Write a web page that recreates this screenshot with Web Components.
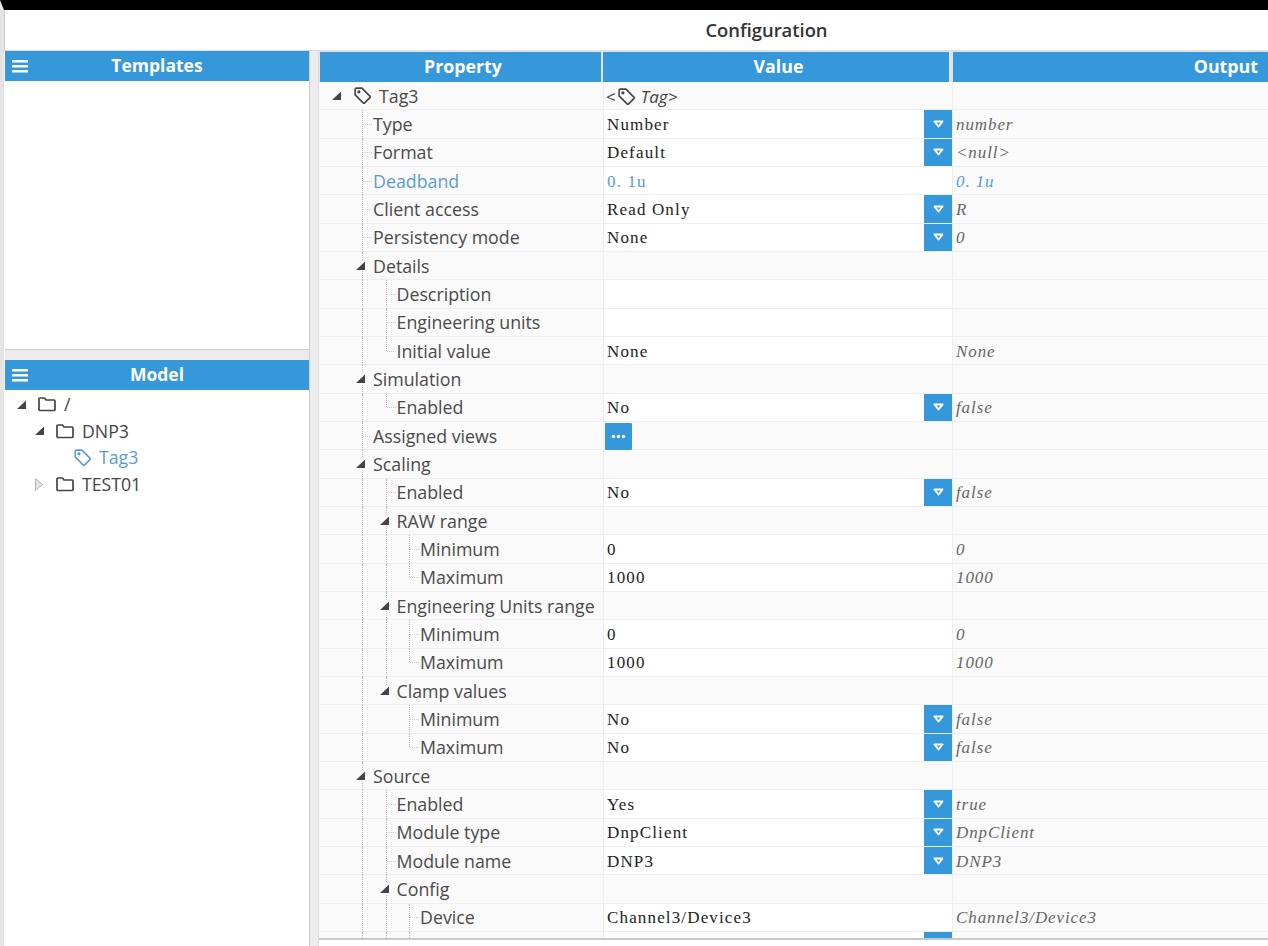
<!DOCTYPE html>
<html>
<head>
<meta charset="utf-8">
<title>Configuration</title>
<style>
html, body { margin: 0; height: 100%; overflow: hidden; background: #fff; }
body { font-family: "Open Sans", sans-serif; color: #444; }
</style>
</head>
<body>
<app-shell>
  <pane-header slot="templates-head" menu>Templates</pane-header>
  <pane-header slot="model-head" menu>Model</pane-header>
  <model-tree slot="model">
    <tree-item depth="0" open icon="folder">/</tree-item>
    <tree-item depth="1" open icon="folder">DNP3</tree-item>
    <tree-item depth="2" icon="tag" active>Tag3</tree-item>
    <tree-item depth="1" closed icon="folder">TEST01</tree-item>
  </model-tree>
  <prop-grid slot="config">
    <prop-row depth="0" group root output="">Tag3</prop-row>
    <prop-row depth="1" value="Number" output="number" dd>Type</prop-row>
    <prop-row depth="1" value="Default" output="<null>" dd>Format</prop-row>
    <prop-row depth="1" value="0. 1u" output="0. 1u" changed>Deadband</prop-row>
    <prop-row depth="1" value="Read Only" output="R" dd>Client access</prop-row>
    <prop-row depth="1" value="None" output="0" dd>Persistency mode</prop-row>
    <prop-row depth="1" group>Details</prop-row>
    <prop-row depth="2" edit>Description</prop-row>
    <prop-row depth="2" edit>Engineering units</prop-row>
    <prop-row depth="2" last value="None" output="None">Initial value</prop-row>
    <prop-row depth="1" group>Simulation</prop-row>
    <prop-row depth="2" last value="No" output="false" dd>Enabled</prop-row>
    <prop-row depth="1" more>Assigned views</prop-row>
    <prop-row depth="1" group>Scaling</prop-row>
    <prop-row depth="2" value="No" output="false" dd>Enabled</prop-row>
    <prop-row depth="2" group>RAW range</prop-row>
    <prop-row depth="3" value="0" output="0">Minimum</prop-row>
    <prop-row depth="3" last value="1000" output="1000">Maximum</prop-row>
    <prop-row depth="2" group>Engineering Units range</prop-row>
    <prop-row depth="3" value="0" output="0">Minimum</prop-row>
    <prop-row depth="3" last value="1000" output="1000">Maximum</prop-row>
    <prop-row depth="2" group last>Clamp values</prop-row>
    <prop-row depth="3" nolevel2 value="No" output="false" dd>Minimum</prop-row>
    <prop-row depth="3" nolevel2 last value="No" output="false" dd>Maximum</prop-row>
    <prop-row depth="1" group>Source</prop-row>
    <prop-row depth="2" value="Yes" output="true" dd>Enabled</prop-row>
    <prop-row depth="2" value="DnpClient" output="DnpClient" dd>Module type</prop-row>
    <prop-row depth="2" value="DNP3" output="DNP3" dd>Module name</prop-row>
    <prop-row depth="2" group>Config</prop-row>
    <prop-row depth="3" value="Channel3/Device3" output="Channel3/Device3">Device</prop-row>
    <prop-row depth="3" dd></prop-row>
  </prop-grid>
</app-shell>

<script>
const TAG_ICON = '<svg width="17" height="17" viewBox="1 1 15 15" fill="none" stroke="currentColor" stroke-width="1.400" stroke-linejoin="round"><path d="M2 3a1 1 0 0 1 1-1h5l7 7a1 1 0 0 1 0 1.400L10.400 15a1 1 0 0 1-1.400 0L2 8z"/><circle cx="5.300" cy="5.300" r=".7"/></svg>';
const FOLDER_ICON = '<svg width="18" height="16" viewBox="0 0 18 16" fill="none" stroke="currentColor" stroke-width="1.700" stroke-linejoin="round"><path d="M1 3a1 1 0 0 1 1-1h4.500l1.500 2h8a1 1 0 0 1 1 1v8.500a1 1 0 0 1-1 1H2a1 1 0 0 1-1-1z"/></svg>';
const OPEN_TOGGLE = '<svg width="11" height="11" viewBox="0 0 11 11"><path d="M10 1.500V10H1z" fill="#444"/></svg>';
const CLOSED_TOGGLE = '<svg width="9" height="15" viewBox="0 0 9 15"><path d="M1.500 1.500l7 6-7 6z" fill="#e4e4e4" stroke="#b5b5b5"/></svg>';

class AppShell extends HTMLElement {
  constructor() {
    super();
    this.attachShadow({ mode: 'open' });
    this.shadowRoot.innerHTML = `
      <style>
        :host { display: block; height: 946px; width: 1268px; box-sizing: border-box; border-top: 10px solid #000; border-left: 4px solid #e4e4e4; overflow: hidden; }
        .title { height: 41px; line-height: 40px; text-align: center; font-weight: 600; font-size: 18.400px; color: #333; border-left: 1px solid #ccc; border-bottom: 1px solid #ddd; box-sizing: border-box; padding-left: 260px; }
        .main { display: flex; height: 895px; padding-left: 1px; }
        .left { width: 304px; flex: none; display: flex; flex-direction: column; }
        .split-v { width: 10px; flex: none; background: #ececec; border-left: 1px solid #ccc; border-right: 1px solid #ddd; box-sizing: border-box; }
        .split-h { height: 11px; flex: none; background: #ececec; border-top: 1px solid #ccc; box-sizing: border-box; }
        .pane-top { height: 298px; flex: none; }
        .pane-bottom { flex: 1; min-height: 0; }
        .right { flex: 1; min-width: 0; height: 887px; border-bottom: 2px solid #c8c8c8; overflow: hidden; }
      </style>
      <div class="title">Configuration</div>
      <div class="main">
        <div class="left">
          <div class="pane-top"><slot name="templates-head"></slot></div>
          <div class="split-h"></div>
          <div class="pane-bottom"><slot name="model-head"></slot><slot name="model"></slot></div>
        </div>
        <div class="split-v"></div>
        <div class="right"><slot name="config"></slot></div>
      </div>`;
  }
}

class PaneHeader extends HTMLElement {
  constructor() {
    super();
    this.attachShadow({ mode: 'open' });
    this.shadowRoot.innerHTML = `
      <style>
        :host { display: block; position: relative; height: 30px; line-height: 29px; background: #3498db; color: #fff; font-weight: 700; font-size: 17.500px; text-align: center; }
        svg { position: absolute; left: 7px; top: 8px; }
      </style>
      <svg width="17" height="15" viewBox="0 0 17 15" fill="#fff"><rect y="1" width="16" height="2.500"/><rect y="6" width="16" height="2.500"/><rect y="11" width="16" height="2.500"/></svg>
      <slot></slot>`;
  }
}

class ModelTree extends HTMLElement {
  constructor() {
    super();
    this.attachShadow({ mode: 'open' });
    this.shadowRoot.innerHTML = `
      <style>:host { display: block; padding-top: 1px; }</style>
      <slot></slot>`;
  }
}

class TreeItem extends HTMLElement {
  connectedCallback() {
    if (this.shadowRoot) return;
    this.attachShadow({ mode: 'open' });
    const depth = +this.getAttribute('depth');
    const toggle = this.hasAttribute('open') ? OPEN_TOGGLE : this.hasAttribute('closed') ? CLOSED_TOGGLE : '';
    const icon = this.getAttribute('icon') === 'tag' ? TAG_ICON : FOLDER_ICON;
    this.shadowRoot.innerHTML = `
      <style>
        :host { display: flex; align-items: center; height: 26.600px; font-size: 17.700px; color: #444; padding-left: ${11 + depth * 18}px; }
        :host([active]) { color: #5b9bd5; }
        .toggle { width: 22px; flex: none; display: flex; align-items: center; }
        .icon { display: flex; margin-right: 8px; color: #444; }
        :host([active]) .icon { color: #5b9bd5; }
      </style>
      <span class="toggle">${toggle}</span><span class="icon">${icon}</span><slot></slot>`;
  }
}

class PropGrid extends HTMLElement {
  constructor() {
    super();
    this.attachShadow({ mode: 'open' });
    this.shadowRoot.innerHTML = `
      <style>
        :host { display: block; }
        .head { display: grid; grid-template-columns: 281px 346px 1fr; column-gap: 2px; height: 31px; box-sizing: border-box; padding: 1px 0 0 1px; line-height: 29px; background: #e4e4e4; color: #fff; font-weight: 700; font-size: 17.800px; text-align: center; }
        .head div { background: #3498db; padding-left: 5px; box-sizing: border-box; }
        .head div:last-child { margin-left: 2px; padding: 0 10px 0 0; text-align: right; }
      </style>
      <div class="head"><div>Property</div><div>Value</div><div>Output</div></div>
      <slot></slot>`;
  }
}

class PropRow extends HTMLElement {
  connectedCallback() {
    if (this.shadowRoot) return;
    this.attachShadow({ mode: 'open' });
    const depth = +this.getAttribute('depth');
    const isGroup = this.hasAttribute('group');
    const isLast = this.hasAttribute('last');
    const value = this.getAttribute('value') || '';
    const output = this.getAttribute('output') || '';
    const esc = s => s.replace(/</g, '&lt;').replace(/>/g, '&gt;');

    // tree guides, one column for each level above this row
    let guides = '';
    for (let d = 1; d <= depth; d++) {
      const own = d === depth;
      const cls = ['guide'];
      if (own) cls.push('own');
      if (own && isLast) cls.push('half');
      if (own && !isGroup) cls.push('stub');
      const line = d === 2 && this.hasAttribute('nolevel2') ? '' : '<span class="v"></span>';
      guides += `<span class="${cls.join(' ')}">${line}${own && isGroup ? OPEN_TOGGLE : ''}</span>`;
    }
    if (this.hasAttribute('root')) guides = `<span class="root-toggle">${OPEN_TOGGLE}</span><span class="root-icon">${TAG_ICON}</span>`;

    let valueCell = `<span class="text">${esc(value)}</span>`;
    if (this.hasAttribute('root')) valueCell = `<span class="tagval">&lt;<span class="ti">${TAG_ICON}</span><i>Tag&gt;</i></span>`;
    if (this.hasAttribute('dd')) valueCell += '<drop-btn></drop-btn>';
    if (this.hasAttribute('more')) valueCell = '<more-btn></more-btn>';

    const white = !isGroup && !this.hasAttribute('more') ? ' white' : '';
    this.shadowRoot.innerHTML = `
      <style>
        :host { display: grid; grid-template-columns: 284px 349px 1fr; height: 28.330px; box-sizing: border-box; color: #4a4a4a; font-size: 17.800px; background: #fafafa; }
        .cell { box-sizing: border-box; min-width: 0; display: flex; align-items: center; border-bottom: 1px solid #eee; height: 28.330px; position: relative; }
        .prop { padding-left: 43px; }
        .val { border-left: 1px solid #eee; font-family: "Liberation Serif", serif; font-size: 17px; letter-spacing: 1.150px; color: #222; padding: 2px 0 0 3px; }
        .val.white { background: #fff; }
        .out { font-family: "Liberation Serif", serif; font-size: 17px; letter-spacing: .9px; font-style: italic; color: #666; padding: 2px 0 0 3px; border-left: 1px solid #eee; }
        :host([changed]) .prop, :host([changed]) .val, :host([changed]) .out { color: #5b9bd5; }
        .guide { width: 23.500px; flex: none; height: 100%; position: relative; }
        .guide.own { width: 11px; }
        .v { position: absolute; left: 0; top: 0; bottom: -1px; border-left: 1px dotted #bbb; }
        .half .v { bottom: 50%; }
        .stub::after { content: ""; position: absolute; left: 1px; top: 50%; width: 9px; border-top: 1px dotted #ccc; }
        .guide > svg { position: absolute; left: -7px; top: 8px; background: #fafafa; }
        .root-toggle { display: flex; width: 23px; margin-left: -31px; }
        .root-icon { display: flex; margin-right: 8px; color: #444; }
        .text { white-space: pre; }
        .tagval { display: flex; align-items: center; color: #444; font-family: "Open Sans", sans-serif; font-size: 17px; letter-spacing: 0; margin-left: -1px; }
        .ti { display: flex; margin: 0 6px 0 2px; }
        drop-btn { position: absolute; right: 0; top: 0; bottom: 0; }
        more-btn { margin-left: -2px; }
      </style>
      <div class="cell prop">${guides}<slot></slot></div>
      <div class="cell val${white}">${valueCell}</div>
      <div class="cell out">${esc(output)}</div>`;
  }
}

class DropBtn extends HTMLElement {
  constructor() {
    super();
    this.attachShadow({ mode: 'open' });
    this.shadowRoot.innerHTML = `
      <style>
        :host { display: flex; align-items: center; justify-content: center; width: 28px; background: #3498db; }
      </style>
      <svg width="11" height="8" viewBox="0 0 11 8"><path d="M1.500 1.500h8l-4 5z" fill="#3498db" stroke="#fff" stroke-width="2" stroke-linejoin="round"/></svg>`;
  }
}

class MoreBtn extends HTMLElement {
  constructor() {
    super();
    this.attachShadow({ mode: 'open' });
    this.shadowRoot.innerHTML = `
      <style>
        :host { display: flex; align-items: center; justify-content: center; width: 27px; height: 27px; background: #3498db; border-radius: 1px; }
      </style>
      <svg width="15" height="5" viewBox="0 0 15 5" fill="#fff"><circle cx="2.500" cy="2.500" r="1.700"/><circle cx="7.500" cy="2.500" r="1.700"/><circle cx="12.500" cy="2.500" r="1.700"/></svg>`;
  }
}

customElements.define('app-shell', AppShell);
customElements.define('pane-header', PaneHeader);
customElements.define('model-tree', ModelTree);
customElements.define('tree-item', TreeItem);
customElements.define('prop-grid', PropGrid);
customElements.define('prop-row', PropRow);
customElements.define('drop-btn', DropBtn);
customElements.define('more-btn', MoreBtn);
</script>
</body>
</html>
